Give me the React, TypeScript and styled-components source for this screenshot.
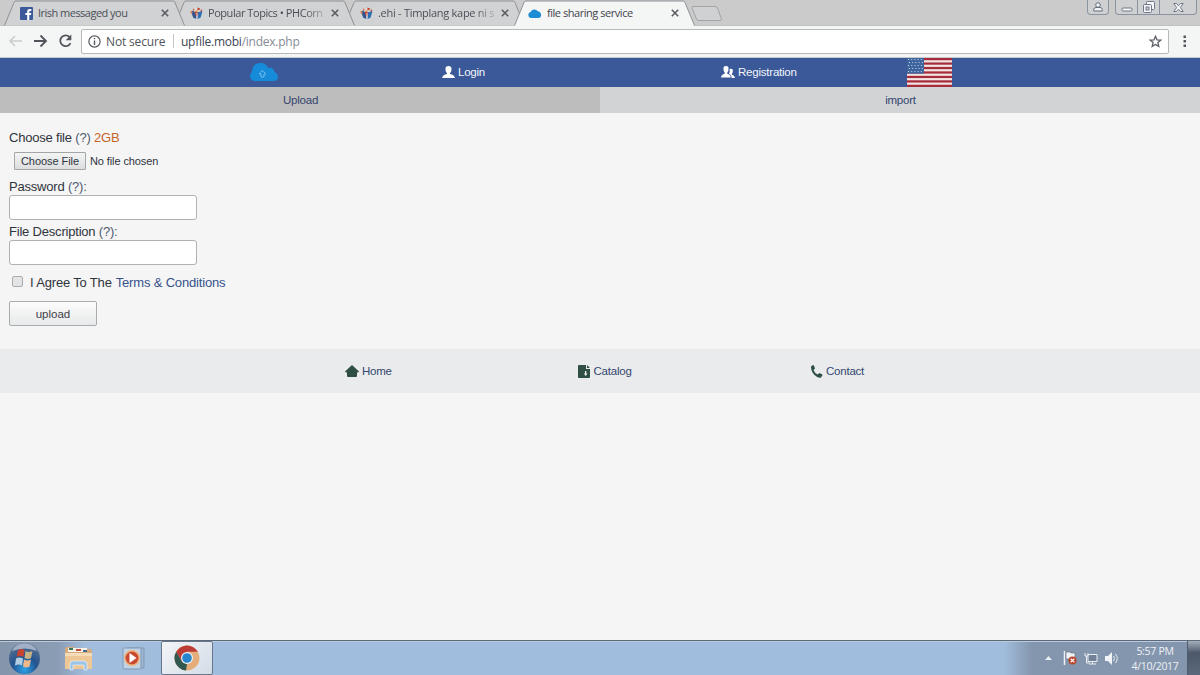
import * as React from 'react';
import styled, { createGlobalStyle } from 'styled-components';

const COLORS = {
  blue: '#3b5998',
  page: '#f5f5f5',
  link: '#35528c',
  text: '#30343c',
  green: '#2f4f45',
  chrome: '#cbcbcb',
};

const UI_FONT = "'Open Sans', 'Noto Sans', sans-serif";
const PAGE_FONT = "'Liberation Sans', Arial, sans-serif";

const GlobalStyle = createGlobalStyle`
  *, *::before, *::after { box-sizing: border-box; }
  body {
    margin: 0;
    overflow: hidden;
    background: ${COLORS.page};
    font-family: ${PAGE_FONT};
  }
  svg { display: block; flex: none; }
`;

const Screen = styled.div`
  display: flex;
  flex-direction: column;
  width: 1200px;
  height: 675px;
`;

/* browser window */

const TabStrip = styled.div`
  display: flex;
  height: 26px;
  padding-left: 4px;
  background: ${COLORS.chrome};
  border-bottom: 1px solid #c0c1c2;
`;

const TabBox = styled.div<{ $order: number; $active?: boolean }>`
  position: relative;
  z-index: ${props => props.$order};
  display: flex;
  align-items: center;
  flex: none;
  width: 181px;
  height: 26px;
  margin-right: -11px;
  padding: 0 16px 0 ${props => (props.$active ? 14 : 16)}px;
`;

const TabShape = styled.svg`
  position: absolute;
  top: 0;
  left: 0;
  z-index: -1;
`;

const TabTitle = styled.div<{ $spacing: number; $active?: boolean; $fade?: boolean }>`
  flex: 1;
  min-width: 0;
  margin: 0 4px 0 5px;
  white-space: nowrap;
  font: 11px/18px ${UI_FONT};
  letter-spacing: ${props => props.$spacing}px;
  color: ${props => (props.$active ? '#3f444c' : '#4b5058')};
  mask-image: ${props =>
    props.$fade ? 'linear-gradient(90deg, #000 calc(100% - 22px), rgba(0, 0, 0, 0.15))' : 'none'};
`;

const NewTab = styled.svg`
  margin: 6px 0 0 7px;
`;

const WindowButtons = styled.div`
  display: flex;
  align-items: flex-start;
  margin: 0 3px 0 auto;
`;

const WindowButton = styled.div<{ $width: number; $gap?: number; $first?: boolean; $last?: boolean }>`
  display: flex;
  align-items: center;
  justify-content: center;
  width: ${props => props.$width}px;
  height: 15px;
  margin-right: ${props => props.$gap || 0}px;
  border: 1px solid #8b93a0;
  border-top: 0;
  border-left-width: ${props => (props.$first ? 1 : 0)}px;
  border-radius: 0 0 ${props => (props.$last ? 4 : 0)}px ${props => (props.$first ? 4 : 0)}px;
  background: #cfd0d1;
`;

const Toolbar = styled.div`
  display: flex;
  align-items: center;
  height: 32px;
  padding: 0 13px 1px 8px;
  background: #f4f5f5;
  border-bottom: 1px solid #c6c9ce;
`;

const NavIcons = styled.div`
  display: flex;
  gap: 10px;
  width: 73px;
`;

const AddressBar = styled.div`
  display: flex;
  align-items: center;
  width: 1088px;
  height: 25px;
  padding: 0 6px;
  border: 1px solid #b6b8ba;
  border-radius: 2px;
  background: #fff;
  font: 12px/24px ${UI_FONT};
  white-space: nowrap;
`;

const Security = styled.span`
  width: 67px;
  margin-left: 5px;
  height: 23px;
  color: #50545a;
  letter-spacing: -0.15px;
`;

const Divider = styled.span`
  width: 1px;
  height: 14px;
  margin-right: 7px;
  background: #c4c6c9;
`;

const Address = styled.span`
  flex: 1;
  height: 23px;
  color: #3c4452;
  letter-spacing: -0.25px;

  span {
    color: #858b95;
  }
`;

/* page */

const Header = styled.header`
  display: grid;
  grid-template-columns: 192px 279px 186px 45px;
  height: 29px;
  padding-left: 250px;
  background: ${COLORS.blue};
`;

const HeaderItem = styled.div`
  display: flex;
  align-items: center;
  gap: 3px;
  height: 28px;
  color: #f2f5fb;
  font-size: 11.5px;
  line-height: 14px;
  letter-spacing: -0.22px;
  white-space: nowrap;
`;

const FlagLink = styled.a`
  height: 29px;
`;

const Segments = styled.nav`
  display: grid;
  grid-template-columns: 1fr 1fr;
  height: 26px;
`;

const Segment = styled.a<{ $active?: boolean }>`
  padding-left: 1px;
  text-align: center;
  font-size: 11.5px;
  line-height: 26px;
  letter-spacing: -0.22px;
  color: #35456f;
  background: ${props => (props.$active ? '#bdbdbd' : '#d1d3d4')};
`;

const Form = styled.form`
  display: flex;
  flex-direction: column;
  align-items: flex-start;
  height: 236px;
  padding: 17px 9px 0;
  color: ${COLORS.text};
`;

const FieldLabel = styled.label`
  height: 16px;
  font-size: 13px;
  line-height: 16px;
  letter-spacing: -0.2px;
  white-space: nowrap;
`;

const Hint = styled.span`
  color: #4e5a70;
`;

const Limit = styled.span`
  color: #c5652a;
`;

const FileRow = styled.div`
  display: flex;
  align-items: center;
  gap: 4px;
  height: 19px;
  margin: 5px 0 9px 5px;
  font-size: 11px;
  line-height: 14px;
  letter-spacing: -0.1px;
  white-space: nowrap;
`;

const FileButton = styled.button`
  width: 72px;
  height: 18px;
  padding: 0;
  border: 1px solid #a3a5a7;
  border-radius: 1px;
  background: linear-gradient(#f4f4f4, #dcdedf);
  font: 11px/16px ${PAGE_FONT};
  letter-spacing: -0.05px;
  color: #30343c;
`;

const TextInput = styled.input`
  width: 188px;
  height: 25px;
  margin: 0 0 4px;
  border: 1px solid #b0b1b2;
  border-radius: 3px;
  background: #fff;
`;

const AgreeRow = styled.div`
  display: flex;
  align-items: center;
  height: 16px;
  margin: 5px 0 11px 3px;
  font-size: 13px;
  letter-spacing: -0.17px;
  white-space: nowrap;
`;

const Checkbox = styled.span`
  width: 11px;
  height: 11px;
  margin: -2px 7px 0 0;
  border: 1px solid #a9abad;
  border-radius: 2px;
  background: #e2e4e5;
`;

const Terms = styled.a`
  margin-left: 4px;
  color: ${COLORS.link};
`;

const SubmitButton = styled.button`
  width: 88px;
  height: 25px;
  padding: 0;
  border: 1px solid #a9abad;
  border-radius: 2px;
  background: linear-gradient(#fcfcfc, #e8e9ea);
  font: 11.5px/22px ${PAGE_FONT};
  letter-spacing: 0;
  color: #3e4248;
`;

const Footer = styled.footer`
  display: grid;
  grid-template-columns: 232.5px 232.5px 232px;
  height: 44px;
  padding-left: 345px;
  background: #e9ebec;
`;

const FooterLink = styled.a`
  display: flex;
  align-items: center;
  gap: 3px;
  height: 44px;
  font-size: 11.5px;
  letter-spacing: -0.22px;
  color: #34476f;
  white-space: nowrap;
`;

/* taskbar */

const Taskbar = styled.div`
  display: flex;
  height: 35px;
  margin-top: auto;
  border-top: 1px solid #5e6876;
  background: linear-gradient(90deg, #8596ab 0, #8b9db4 58px, #a1bddd 85px, #a1bddd 1004px, #8496ad 1032px);
  box-shadow: inset 0 1px #b9cbe0;
`;

const Launcher = styled.div<{ $width: number; $active?: boolean }>`
  display: flex;
  align-items: center;
  justify-content: center;
  width: ${props => props.$width}px;
  height: 34px;
  border: ${props => (props.$active ? '1px solid #68778c' : '0')};
  border-radius: 2px;
  background: ${props => (props.$active ? 'linear-gradient(135deg, #f3f5f7, #d3dce7)' : 'none')};
`;

const Tray = styled.div`
  display: flex;
  align-items: center;
  gap: 7px;
  margin-left: auto;
`;

const Clock = styled.div`
  width: 64px;
  margin-left: -3px;
  padding-top: 2px;
  font: 10.5px/15px ${UI_FONT};
  letter-spacing: -0.3px;
  text-align: center;
  color: #eef2f7;
  white-space: nowrap;
`;

const ShowDesktop = styled.div`
  width: 13px;
  height: 34px;
  border-left: 1px solid #4f5c6e;
  background: linear-gradient(#a3aebb, #4d596b 35%, #5b687b);
`;

const FacebookIcon = () => (
  <svg width="13" height="13" viewBox="0 0 13 13">
    <rect width="13" height="13" rx="1" fill="#3b5998" />
    <path d="M7.2 13V8H5.4V6h1.8V4.6C7.2 2.8 8.2 2 9.8 2h1.5v1.9h-1c-.8 0-1 .3-1 1V6h2L11 8H9.3v5z" fill="#fff" />
  </svg>
);

const ForumIcon = () => (
  <svg width="13" height="13" viewBox="0 0 14 13">
    <path d="M1 4l4-1 2 3v6.5L3.500 11z" fill="#31568f" />
    <path d="M8 5l4-2 1.300 2-2 6L8 12.500z" fill="#2f70b5" />
    <path d="M3 3l2-2 3 0 3 1 1 2-3 1-2-2-2 2z" fill="#e8ddd5" />
    <path d="M3 1l2 1-1 2zM8 0l3 1-1 2-2 0zM11 3l2-1 0 3zM5 5l3 0 1 2-2 3-1-2z" fill="#bf4935" />
    <path d="M0 4l2 0 1 2-2 1zM6 3l2 0 0 2-2 0z" fill="#e08c56" />
    <path d="M7 6l1 0 0 6-1 0z" fill="#f1eeec" />
  </svg>
);

const CloudIcon = () => (
  <svg width="14" height="9" viewBox="0 0 14 9">
    <path d="M3 9a3 3 0 0 1-.4-5.900A4 4 0 0 1 9.800 2.300 3.500 3.500 0 0 1 11 9z" fill="#1c8cd5" />
  </svg>
);

const CloseIcon = () => (
  <svg width="8" height="8" viewBox="0 0 8 8">
    <path d="M.8.8l6.400 6.400M7.200.8L.8 7.200" stroke="#595d63" strokeWidth="1.600" />
  </svg>
);

type TabProps = {
  title: string;
  icon: React.ReactNode;
  order: number;
  spacing: number;
  active?: boolean;
  fade?: boolean;
};

const Tab: React.FunctionComponent<TabProps> = ({ title, icon, order, spacing, active, fade }) => (
  <TabBox $order={order} $active={active}>
    <TabShape width="181" height="26">
      <path
        d="M.5 25.5L10 2.5Q10.5 1 12 1H169Q170.500 1 171 2.500L180.500 25.500"
        fill={active ? '#f4f5f5' : '#d1d2d3'}
        stroke="#8f9197"
      />
      {active && <path d="M1 25.500H180" stroke="#f4f5f5" />}
    </TabShape>
    {icon}
    <TabTitle $spacing={spacing} $active={active} $fade={fade}>
      {title}
    </TabTitle>
    <CloseIcon />
  </TabBox>
);

const tabs: TabProps[] = [
  { title: 'Irish messaged you', icon: <FacebookIcon />, order: 3, spacing: -0.52 },
  { title: 'Popular Topics • PHCorn', icon: <ForumIcon />, order: 2, spacing: -0.45, fade: true },
  { title: '.ehi - Timplang kape ni s', icon: <ForumIcon />, order: 1, spacing: -0.28, fade: true },
  { title: 'file sharing service', icon: <CloudIcon />, order: 4, spacing: -0.46, active: true },
];

const StartOrb = () => (
  <svg width="33" height="32" viewBox="0 0 33 32">
    <defs>
      <radialGradient id="orb" cx="50%" cy="85%" r="80%">
        <stop offset="0" stopColor="#2ba2e8" />
        <stop offset=".5" stopColor="#23548f" />
        <stop offset="1" stopColor="#59708f" />
      </radialGradient>
    </defs>
    <circle cx="16.500" cy="16.500" r="15.500" fill="url(#orb)" />
    <path d="M4 9a14 14 0 0 1 25 0q-12-5-25 0z" fill="#b5c2d3" opacity=".8" />
    <path d="M10 8q3-2 6.500 0l-1 7q-3-2-7 0z" fill="#c54432" />
    <path d="M17.500 9q3 2 7 0l-1.500 7q-3 2-6.500 0z" fill="#c5b387" />
    <path d="M8 16.500q3-2 7 0l-1 7q-3-2-7 0z" fill="#b5cde0" />
    <path d="M16 17.500q3 2 7 0l-1.500 7q-3 2-6.500 0z" fill="#efb888" />
  </svg>
);

const FolderIcon = () => (
  <svg width="29" height="27" viewBox="0 0 29 27">
    <path d="M1 4q0-2 2-2h7l2 2h14q2 0 2 2v17H1z" fill="#d7aa7d" />
    <path d="M4 3h19v4H4z" fill="#f5f1e6" />
    <path d="M5 3h4v2H5z" fill="#35775d" />
    <path d="M12 4h5v2h-5z" fill="#c84c37" />
    <path d="M19 5h4v2h-4z" fill="#3e6c9d" />
    <path d="M1 8h27v16H1z" fill="#eec797" />
    <path d="M1 8h27v3H1z" fill="#f6dcb6" />
    <path d="M6 25v-6q0-3 3-3h11q3 0 3 3v6h-3v-5H9v5z" fill="#9bc4e6" stroke="#e9f2fa" strokeWidth=".7" />
  </svg>
);

const PlayerIcon = () => (
  <svg width="25" height="23" viewBox="0 0 25 23">
    <path d="M6 1h16v20H6z" fill="#9db6d2" stroke="#8199b5" />
    <rect x="1" y="1" width="18" height="21" rx="1" fill="#bfd2e6" stroke="#8098b4" />
    <circle cx="10" cy="11" r="8" fill="#f2b781" />
    <circle cx="10" cy="11" r="6.500" fill="#c94a32" />
    <path d="M7.500 6l7 5-7 5z" fill="#fff" />
  </svg>
);

const ChromeIcon = () => (
  <svg width="26" height="26" viewBox="0 0 26 26">
    <circle cx="13" cy="13" r="12.500" fill="#e5ad7a" />
    <path d="M2.200 6.700A12.500 12.500 0 0 1 23.800 6.700H13L7.500 16z" fill="#bd3b36" />
    <path d="M2.200 6.700L7.600 16 13 19l-1 6.500A12.500 12.500 0 0 1 2.200 6.700z" fill="#31594f" />
    <circle cx="13" cy="13" r="6" fill="#eef1f4" />
    <circle cx="13" cy="13" r="4.800" fill="#2685ce" />
  </svg>
);

const Flag = () => (
  <svg width="45" height="29" viewBox="0 0 45 29">
    <rect width="45" height="29" fill="#f1e4e2" />
    {[0, 1, 2, 3, 4, 5, 6].map(i => (
      <rect key={i} y={i * 4.46} width="45" height="2.23" fill="#a62c3c" />
    ))}
    <rect width="17" height="15.6" fill="#3f659f" />
    {[0, 1, 2, 3, 4].map(row =>
      [0, 1, 2, 3, 4].map(col => (
        <rect key={`${row}-${col}`} x={1 + col * 3.2 + (row % 2)} y={1 + row * 3} width="1" height="1" fill="#c5d3e5" />
      ))
    )}
  </svg>
);

const App: React.FunctionComponent = () => (
  <Screen>
    <GlobalStyle />
    <TabStrip>
      {tabs.map(tab => (
        <Tab key={tab.title} {...tab} />
      ))}
      <NewTab width="32" height="15">
        <path d="M2 .5H24Q26 .5 26.500 2L30.500 13Q31 14.500 29 14.500H8Q6 14.500 5.500 13L1 2Q.5 .5 2 .5z" fill="#d0d1d2" stroke="#a1a3a7" />
      </NewTab>
      <WindowButtons>
        <WindowButton $width={22} $gap={6} $first $last>
          <svg width="10" height="10" viewBox="0 0 10 10">
            <path d="M.7 9V7.500Q.8 5.500 3 5.500h4q2.200 0 2.300 2V9z" fill="#f1f2f4" stroke="#636c7c" />
            <circle cx="5" cy="3" r="2.300" fill="#f1f2f4" stroke="#636c7c" />
          </svg>
        </WindowButton>
        <WindowButton $width={23} $first>
          <svg width="12" height="12" viewBox="0 0 12 12">
            <rect x="1" y="7" width="10" height="3" rx="1" fill="#f7f8f9" stroke="#6e7787" />
          </svg>
        </WindowButton>
        <WindowButton $width={22}>
          <svg width="12" height="12" viewBox="0 0 12 12">
            <rect x="3.500" y=".5" width="8" height="8" rx="1" fill="#f7f8f9" stroke="#6e7787" />
            <rect x=".5" y="3.500" width="8" height="8" rx="1" fill="#f7f8f9" stroke="#6e7787" />
            <rect x="3" y="6" width="3" height="3" fill="#cfd0d1" stroke="#6e7787" />
          </svg>
        </WindowButton>
        <WindowButton $width={37} $last>
          <svg width="11" height="9" viewBox="0 0 11 9">
            <path d="M.8.500h2.700l2 2.300L7.500.5h2.700L7.300 4.500l2.900 4H7.500l-2-2.300-2 2.300H.8l2.900-4z" fill="#f7f8f9" stroke="#6e7787" />
          </svg>
        </WindowButton>
      </WindowButtons>
    </TabStrip>
    <Toolbar>
      <NavIcons>
        <svg width="15" height="14" viewBox="0 0 15 14">
          <path d="M14 7H2M7 2L2 7l5 5" fill="none" stroke="#c9cbce" strokeWidth="1.500" />
        </svg>
        <svg width="15" height="14" viewBox="0 0 15 14">
          <path d="M1 7h11.500M7.500 1.500L13 7l-5.500 5.500" fill="none" stroke="#51555b" strokeWidth="1.800" />
        </svg>
        <svg width="15" height="14" viewBox="0 0 15 14">
          <path d="M12.500 9.200A5.400 5.400 0 1 1 11.500 3" fill="none" stroke="#51555b" strokeWidth="1.800" />
          <path d="M13.300.6v5.600H7.700z" fill="#51555b" />
        </svg>
      </NavIcons>
      <AddressBar>
        <svg width="13" height="13" viewBox="0 0 13 13">
          <circle cx="6.500" cy="6.500" r="5.600" fill="none" stroke="#55595f" strokeWidth="1.200" />
          <path d="M5.800 3h1.400v1.300H5.800zM5.800 5.500h1.400V10H5.800z" fill="#55595f" />
        </svg>
        <Security>Not secure</Security>
        <Divider />
        <Address>
          upfile.mobi<span>/index.php</span>
        </Address>
        <svg width="13" height="13" viewBox="0 0 13 13">
          <path d="M6.500 1.300l1.500 3.500 3.900.3-3 2.500.9 3.800-3.300-2-3.300 2 .9-3.800-3-2.500 3.900-.3z" fill="none" stroke="#5b5f66" strokeWidth="1.300" />
        </svg>
      </AddressBar>
      <svg width="4" height="14" viewBox="0 0 4 14" style={{ marginLeft: 'auto' }}>
        <rect x=".5" y="1.500" width="2.500" height="2.500" fill="#55595f" />
        <rect x=".5" y="6" width="2.500" height="2.500" fill="#55595f" />
        <rect x=".5" y="10.500" width="2.500" height="2.500" fill="#55595f" />
      </svg>
    </Toolbar>

    <Header>
      <HeaderItem>
        <svg width="28" height="18" viewBox="0 0 28 18">
          <path d="M5 18C2 18 0 15.500 0 13c0-2 1.200-3.600 2-4C2 3 6 0 10 0c4 0 7 1.500 8 5 4-1 6 1 6.500 4C27 10 28 12 28 14c0 2-1.500 4-4 4z" fill="#168bda" />
          <path d="M12.500 7.500l3.300 3.500h-1.800V14h-3v-3H9.200z" fill="none" stroke="#a9d9f2" strokeWidth=".9" strokeDasharray="1.500 .7" />
        </svg>
      </HeaderItem>
      <HeaderItem>
        <svg width="13" height="12" viewBox="0 0 13 12">
          <path d="M6.500 0a3 3 0 0 1 3 3.200c0 1.800-.8 3.300-1.500 3.900v.8c2.500.5 4.500 1.500 5 4.100H0c.5-2.600 2.500-3.600 5-4.100v-.8C4.300 6.500 3.500 5 3.500 3.200A3 3 0 0 1 6.500 0z" fill="#fff" />
        </svg>
        Login
      </HeaderItem>
      <HeaderItem>
        <svg width="14" height="12" viewBox="0 0 14 12">
          <path d="M5 0a2.600 2.600 0 0 1 2.500 3c0 1.700-.6 3-1.200 3.600v1.200c2 .6 3.300 1.600 3.500 3.700H0C.3 9.400 1.600 8.400 3.700 7.800V6.600C3.100 6 2.500 4.700 2.500 3A2.600 2.600 0 0 1 5 0z" fill="#fff" />
          <path d="M8.500 3.300c.3-.4.8-.6 1.300-.6a2 2 0 0 1 2 2.300c0 1.300-.4 2.300-.9 2.800v1c1.800.5 2.800 1.200 3 3.200h-3.200c-.2-2-1-3.300-2.700-4.200.7-1.200.9-2.800.5-4.500z" fill="#fff" />
        </svg>
        Registration
      </HeaderItem>
      <FlagLink>
        <Flag />
      </FlagLink>
    </Header>
    <Segments>
      <Segment $active>Upload</Segment>
      <Segment>import</Segment>
    </Segments>

    <Form>
      <FieldLabel>
        Choose file <Hint>(?)</Hint> <Limit>2GB</Limit>
      </FieldLabel>
      <FileRow>
        <FileButton type="button">Choose File</FileButton>
        <span>No file chosen</span>
      </FileRow>
      <FieldLabel>
        Password <Hint>(?):</Hint>
      </FieldLabel>
      <TextInput />
      <FieldLabel>
        File Description <Hint>(?):</Hint>
      </FieldLabel>
      <TextInput />
      <AgreeRow>
        <Checkbox />
        I Agree To The <Terms>Terms &amp; Conditions</Terms>
      </AgreeRow>
      <SubmitButton type="button">upload</SubmitButton>
    </Form>

    <Footer>
      <FooterLink>
        <svg width="14" height="12" viewBox="0 0 14 12">
          <path d="M7 0l7 6.500-1 1h-1V11q0 1-1 1H3q-1 0-1-1V7.500H1l-1-1z" fill={COLORS.green} />
        </svg>
        Home
      </FooterLink>
      <FooterLink>
        <svg width="13" height="13" viewBox="0 0 13 13">
          <path d="M1 0h7v4h4v8q0 1-1 1H1q-1 0-1-1V1q0-1 1-1zM9 0l3 3H9z" fill={COLORS.green} />
          <path d="M7 6h1.300v2.500h1.200L7.700 11 5.800 8.500H7z" fill="#edf2f1" />
        </svg>
        Catalog
      </FooterLink>
      <FooterLink>
        <svg width="13" height="13" viewBox="0 0 13 13">
          <path d="M1 1.500L3 0q.8 0 1 .7L5 3.500 3.500 5q1 3 4.200 4.500L9.300 8l2.600 1.200q.8.500.4 1.300L11 12.500q-3 1-6.500-2.500T1 1.500z" fill={COLORS.green} />
        </svg>
        Contact
      </FooterLink>
    </Footer>

    <Taskbar>
      <Launcher $width={48}>
        <StartOrb />
      </Launcher>
      <Launcher $width={60}>
        <FolderIcon />
      </Launcher>
      <Launcher $width={53}>
        <PlayerIcon />
      </Launcher>
      <Launcher $width={52} $active>
        <ChromeIcon />
      </Launcher>
      <Tray>
        <svg width="7" height="4" viewBox="0 0 7 4">
          <path d="M3.500 0L7 4H0z" fill="#e7edf3" />
        </svg>
        <svg width="14" height="14" viewBox="0 0 14 14" style={{ marginLeft: 4 }}>
          <path d="M1.500 0v14" stroke="#eef2f6" strokeWidth="1.500" />
          <path d="M3 1h4l1 1h4v6H3z" fill="#f0f3f6" stroke="#596777" strokeWidth=".6" />
          <circle cx="9.500" cy="9.500" r="4" fill="#b9442d" />
          <path d="M7.700 7.700l3.600 3.600M11.300 7.700l-3.600 3.600" stroke="#fff1e8" strokeWidth="1.300" />
        </svg>
        <svg width="14" height="13" viewBox="0 0 14 13">
          <path d="M4 2.500h9v7H4zM8.500 10v2M5 12h7" fill="#718298" stroke="#e8edf2" />
          <path d="M1 1v3h3V1M2.500 4v7H6" fill="none" stroke="#e8edf2" />
        </svg>
        <svg width="14" height="13" viewBox="0 0 14 13">
          <path d="M0 4h3l4-4v13L3 9H0z" fill="#f1f4f7" />
          <path d="M8.500 4q2 2.500 0 5M10.500 2q3.500 4.500 0 9" fill="none" stroke="#e8edf2" />
        </svg>
        <Clock>
          5:57 PM
          <br />
          4/10/2017
        </Clock>
      </Tray>
      <ShowDesktop />
    </Taskbar>
  </Screen>
);

export default App;
